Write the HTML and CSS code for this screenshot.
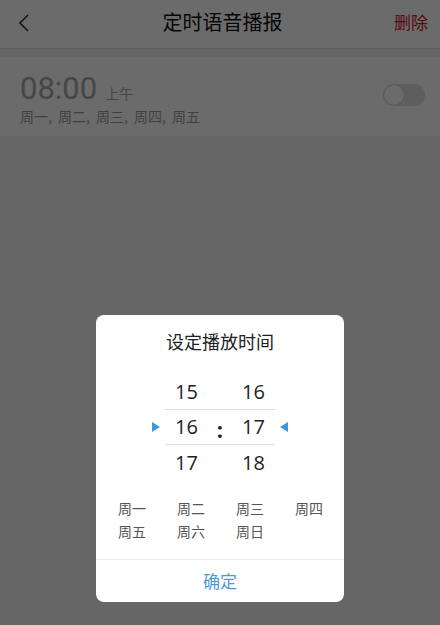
FILE: index.html
```html
<!DOCTYPE html>
<html lang="zh">
<head>
<meta charset="utf-8">
<link rel="stylesheet" href="styles.css">
</head>
<body>
<div class="page">
  <header class="topbar">
    <span class="back"><svg width="14" height="20" viewBox="0 0 14 20"><path d="M11 2 L3 10 L11 18" fill="none" stroke="#333" stroke-width="1.6"/></svg></span>
    <h1 class="title">定时语音播报</h1>
    <span class="del">删除</span>
  </header>
  <div class="card">
    <div class="card-info">
      <div class="time-line"><span class="time">08:00</span><span class="ampm">上午</span></div>
      <div class="days">周一, 周二, 周三, 周四, 周五</div>
    </div>
    <div class="toggle"><span class="knob"></span></div>
  </div>
</div>
<div class="overlay">
  <div class="dialog">
    <div class="dlg-title">设定播放时间</div>
    <div class="picker">
      <span class="tri tri-right"></span>
      <div class="wheel">
        <div class="row"><span class="num">15</span><span class="sep"></span><span class="num">16</span></div>
        <div class="row row-sel"><span class="num">16</span><span class="sep colon">:</span><span class="num">17</span></div>
        <div class="row"><span class="num">17</span><span class="sep"></span><span class="num">18</span></div>
      </div>
      <span class="tri tri-left"></span>
    </div>
    <div class="weekdays">
      <span>周一</span><span>周二</span><span>周三</span><span>周四</span>
      <span>周五</span><span>周六</span><span>周日</span>
    </div>
    <div class="confirm">确定</div>
  </div>
</div>
</body>
</html>
```
FILE: styles.css
```css
html, body {
  margin: 0;
  padding: 0;
}
body {
  width: 440px;
  height: 625px;
  overflow: hidden;
  position: relative;
  font-family: "Noto Sans CJK SC", "Noto Sans", sans-serif;
  background: #f2f2f2;
  line-height: 1.2;
}
.page {
  display: flex;
  flex-direction: column;
}
.topbar {
  height: 48px;
  background: #ffffff;
  display: flex;
  align-items: center;
  justify-content: space-between;
  padding: 0 12px 0 17px;
  border-bottom: 1px solid #e6e6e6;
}
.back {
  display: flex;
  width: 60px;
  margin-top: -2px;
}
.title {
  margin: 0;
  font-size: 20px;
  line-height: 26px;
  font-weight: 400;
  color: #111;
  margin-top: -4px;
  margin-left: 0;
}
.del {
  width: 60px;
  text-align: right;
  font-size: 17px;
  line-height: 24px;
  color: #d0151b;
  margin-top: -4px;
}
.card {
  margin-top: 8px;
  background: #ffffff;
  height: 79px;
  display: flex;
  align-items: center;
  justify-content: space-between;
  padding: 0 15px 0 20px;
}
.card-info {
  display: flex;
  flex-direction: column;
  margin-top: 4px;
}
.time-line {
  display: flex;
  align-items: baseline;
  height: 34px;
}
.time {
  font-family: "Roboto", sans-serif;
  font-size: 31px;
  color: #a8a8a8;
  line-height: 34px;
}
.ampm {
  font-size: 14px;
  color: #a8a8a8;
  margin-left: 8px;
}
.days {
  font-size: 14px;
  color: #9a9a9a;
  line-height: 20px;
  word-spacing: 3px;
}
.toggle {
  width: 42px;
  height: 22px;
  border-radius: 11px;
  background: #e0e0e0;
  position: relative;
  margin-top: -4px;
}
.knob {
  position: absolute;
  left: 1px;
  top: 1px;
  width: 20px;
  height: 20px;
  border-radius: 50%;
  background: #ffffff;
  box-shadow: 0 0 1px rgba(0,0,0,0.3);
}
.overlay {
  position: absolute;
  inset: 0;
  background: rgba(0, 0, 0, 0.58);
  display: flex;
  justify-content: center;
  align-items: flex-start;
}
.dialog {
  margin-top: 315px;
  width: 248px;
  height: 287px;
  background: #ffffff;
  border-radius: 8px;
  display: flex;
  flex-direction: column;
  align-items: center;
}
.dlg-title {
  font-size: 18px;
  color: #222;
  margin-top: 14px;
  line-height: 24px;
}
.picker {
  margin-top: 21px;
  display: flex;
  align-items: center;
  gap: 5px;
}
.wheel {
  display: flex;
  flex-direction: column;
  width: 110px;
}
.row {
  display: flex;
  justify-content: center;
  align-items: center;
  height: 35px;
  font-family: "Open Sans", "Noto Sans", sans-serif;
  font-size: 20px;
  line-height: 26px;
  color: #222;
}
.row-sel {
  border-top: 1px solid #dedede;
  border-bottom: 1px solid #dedede;
  height: 34px;
}
.num {
  width: 40px;
  text-align: center;
}
.sep {
  width: 27px;
  text-align: center;
}
.colon {
  font-weight: 700;
  font-size: 22px;
  margin-top: 3px;
}
.tri {
  width: 0;
  height: 0;
  border-top: 5px solid transparent;
  border-bottom: 5px solid transparent;
}
.tri-right {
  border-left: 8px solid #3d97d9;
}
.tri-left {
  border-right: 8px solid #3d97d9;
}
.weekdays {
  margin-top: 18px;
  display: grid;
  grid-template-columns: repeat(4, 59px);
  row-gap: 2px;
  padding-left: 22px;
  align-self: flex-start;
  font-size: 14px;
  color: #555;
  line-height: 21px;
}
.confirm {
  margin-top: auto;
  width: 100%;
  height: 42px;
  border-top: 1px solid #ececec;
  display: flex;
  align-items: center;
  justify-content: center;
  font-size: 17px;
  line-height: 24px;
  color: #4a9bd1;
}
```
